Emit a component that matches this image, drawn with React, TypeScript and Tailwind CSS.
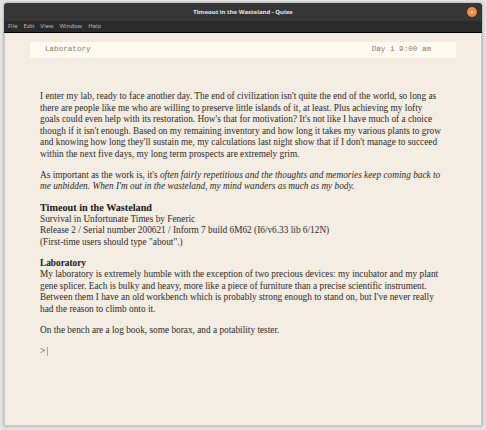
import { ReactNode } from 'react';

const serif = { fontFamily: '"Liberation Serif", "DejaVu Serif", serif' };

function Lines({ lines, className = '' }: { lines: string[]; className?: string }) {
  return (
    <div className={className}>
      {lines.map((l, i) => (
        <div key={i} className="whitespace-nowrap">
          {l}
        </div>
      ))}
    </div>
  );
}

function Para({ children, className = '' }: { children: ReactNode; className?: string }) {
  return <div className={`mb-[9.5px] ${className}`}>{children}</div>;
}

export default function App() {
  return (
    <div className="w-[486px] h-[430px] bg-[#e4e4e4] pt-[3px] px-[4px] pb-[4px] overflow-hidden">
      <div className="h-full flex flex-col shadow-[0_0_3px_rgba(0,0,0,0.35)]">
        {/* Title bar */}
        <div className="h-[18px] bg-[#363636] flex items-center justify-center relative rounded-t-[3px]">
          <span
            className="text-[6px] font-bold text-[#e8e8e8]"
            style={{ fontFamily: '"Noto Sans", "DejaVu Sans", sans-serif' }}
          >
            Timeout in the Wasteland - Quixe
          </span>
          <div className="absolute right-[5px] top-[4px] w-[10px] h-[10px] rounded-full bg-[#f08a3c] flex items-center justify-center text-[6px] leading-none font-bold text-white">
            ×
          </div>
        </div>

        {/* Menu bar */}
        <div
          className="h-[12px] bg-[#2b2b2b] border-b border-black flex items-center gap-[6px] px-[4px] text-[6px] text-[#b8b8b8]"
          style={{ fontFamily: '"Noto Sans", "DejaVu Sans", sans-serif' }}
        >
          <span>File</span>
          <span>Edit</span>
          <span>View</span>
          <span>Window</span>
          <span>Help</span>
        </div>

        {/* Game window */}
        <div className="flex-1 bg-[#f3ede3] border-x border-b border-[#cfcac2] flex flex-col">
          <div
            className="mx-[25px] mt-[9px] h-[16px] bg-[#fdfaf1] flex items-center justify-between pl-[15px] pr-[25px] text-[7.6px] text-[#8a7d6c]"
            style={{ fontFamily: '"Liberation Mono", "DejaVu Sans Mono", monospace' }}
          >
            <span>Laboratory</span>
            <span>Day 1 9:00 am</span>
          </div>

          <div className="pl-[35px] pt-[33px] text-[9.3px] leading-[11.5px] text-[#302b28]" style={serif}>
            <Para>
              <Lines
                lines={[
                  "I enter my lab, ready to face another day. The end of civilization isn't quite the end of the world, so long as",
                  'there are people like me who are willing to preserve little islands of it, at least. Plus achieving my lofty',
                  "goals could even help with its restoration. How's that for motivation? It's not like I have much of a choice",
                  "though if it isn't enough. Based on my remaining inventory and how long it takes my various plants to grow",
                  "and knowing how long they'll sustain me, my calculations last night show that if I don't manage to succeed",
                  'within the next five days, my long term prospects are extremely grim.',
                ]}
              />
            </Para>
            <Para>
              <div className="whitespace-nowrap">
                As important as the work is, it's <em>often fairly repetitious and the thoughts and memories keep coming back to</em>
              </div>
              <div className="whitespace-nowrap italic">
                me unbidden. When I'm out in the wasteland, my mind wanders as much as my body.
              </div>
            </Para>
            <Para>
              <div className="font-bold text-[10.2px] text-[#1a1715]">Timeout in the Wasteland</div>
              <Lines
                lines={[
                  'Survival in Unfortunate Times by Feneric',
                  'Release 2 / Serial number 200621 / Inform 7 build 6M62 (I6/v6.33 lib 6/12N)',
                  '(First-time users should type "about".)',
                ]}
              />
            </Para>
            <Para>
              <div className="font-bold text-[#1a1715]">Laboratory</div>
              <Lines
                lines={[
                  'My laboratory is extremely humble with the exception of two precious devices: my incubator and my plant',
                  'gene splicer. Each is bulky and heavy, more like a piece of furniture than a precise scientific instrument.',
                  "Between them I have an old workbench which is probably strong enough to stand on, but I've never really",
                  'had the reason to climb onto it.',
                ]}
              />
            </Para>
            <Para>
              <div className="whitespace-nowrap">On the bench are a log book, some borax, and a potability tester.</div>
            </Para>
            <div className="flex items-center h-[11.5px] mt-[1.5px]">
              <span className="text-[#302b28]">&gt;</span>
              <span className="ml-[1.5px] w-[1px] h-[9px] bg-[#8cbc8c]" />
            </div>
          </div>
        </div>
      </div>
    </div>
  );
}
